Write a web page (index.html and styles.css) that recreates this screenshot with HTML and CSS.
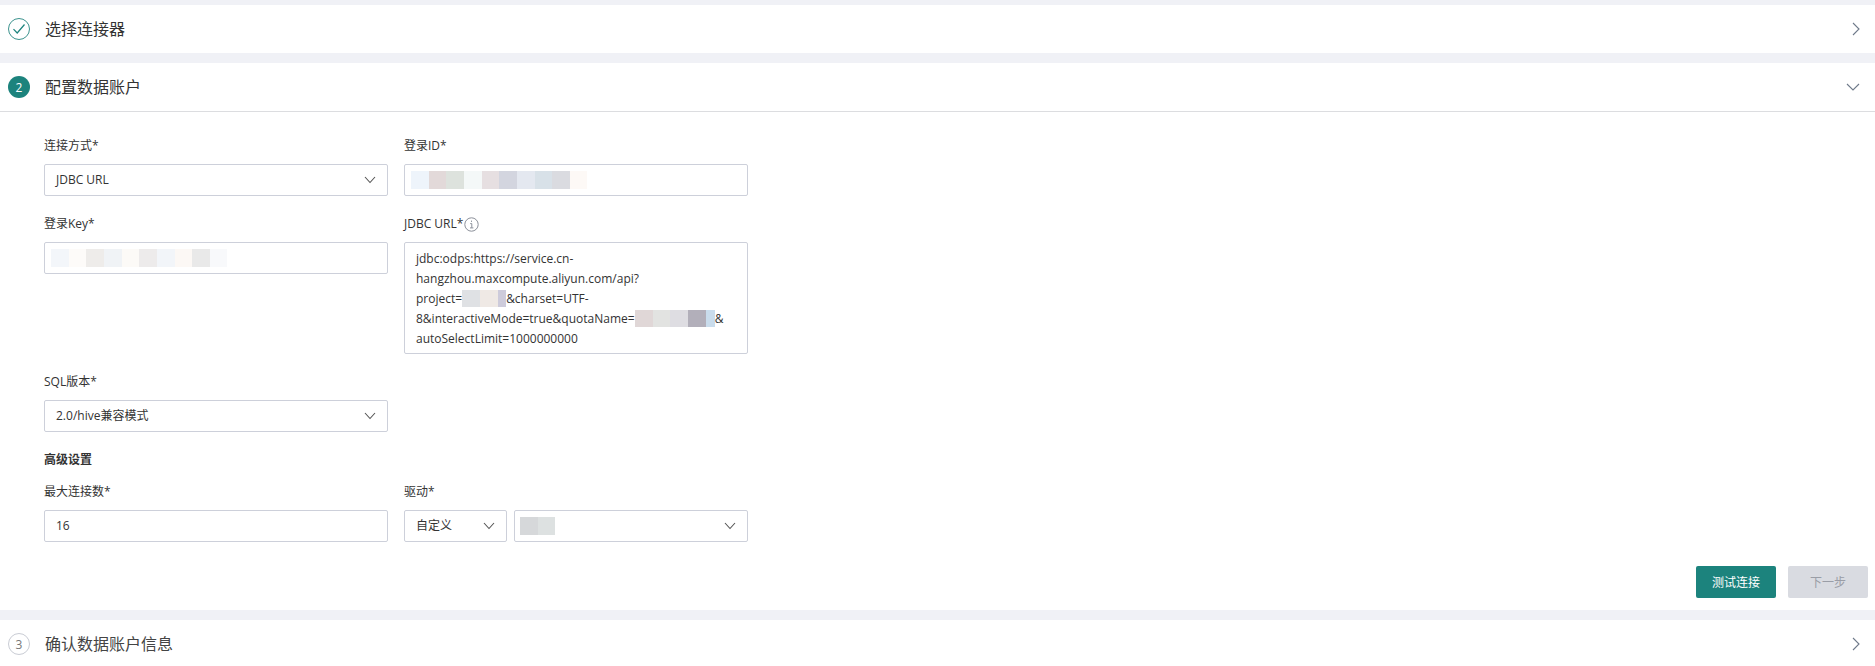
FILE: index.html
```html
<!DOCTYPE html>
<html lang="zh">
<head>
<meta charset="utf-8">
<title>配置数据账户</title>
<link rel="stylesheet" href="styles.css">
</head>
<body>
<div class="steps">
  <section class="card">
    <header class="head">
      <span class="badge badge-done"><svg width="14" height="12" viewBox="0 0 14 12"><path d="M1.5 6.2 5.2 10 12.5 1.5" fill="none" stroke="#1c837d" stroke-width="1.2"/></svg></span>
      <h2 class="title">选择连接器</h2>
      <svg class="head-arrow" width="8" height="14" viewBox="0 0 8 14"><path d="M1 1l6 6-6 6" fill="none" stroke="#6f7a8a" stroke-width="1.1"/></svg>
    </header>
  </section>
  <section class="card">
    <header class="head head-open">
      <span class="badge badge-active">2</span>
      <h2 class="title">配置数据账户</h2>
      <svg class="head-arrow" width="14" height="8" viewBox="0 0 14 8"><path d="M1 1l6 6 6-6" fill="none" stroke="#6f7a8a" stroke-width="1.1"/></svg>
    </header>
    <div class="body">
      <div class="form-grid">
        <div class="field">
          <label class="label">连接方式*</label>
          <div class="control select">JDBC URL<svg class="chev" width="12" height="8" viewBox="0 0 12 8"><path d="M1 1l5 5.5L11 1" fill="none" stroke="#555" stroke-width="1.1"/></svg></div>
        </div>
        <div class="field">
          <label class="label">登录ID*</label>
          <div class="control masked">
            <span class="mosaic mosaic-block">
              <i class="c c18" style="background:#eef4fb"></i><i class="c c17" style="background:#e2d9d9"></i><i class="c c18" style="background:#dde2dd"></i><i class="c c18" style="background:#f4f8f8"></i><i class="c c17" style="background:#e6dfe1"></i><i class="c c18" style="background:#d3d5df"></i><i class="c c18" style="background:#e4e8f0"></i><i class="c c17" style="background:#d8e1e8"></i><i class="c c18" style="background:#dadbe0"></i><i class="c c17" style="background:#fdf9f6"></i>
            </span>
          </div>
        </div>
        <div class="field">
          <label class="label">登录Key*</label>
          <div class="control masked">
            <span class="mosaic mosaic-block">
              <i class="c c18" style="background:#f3f6fa"></i><i class="c c17" style="background:#fdfbf9"></i><i class="c c18" style="background:#eeecea"></i><i class="c c18" style="background:#f0f3f6"></i><i class="c c17" style="background:#fcfaf7"></i><i class="c c18" style="background:#edebeb"></i><i class="c c18" style="background:#f2f5f9"></i><i class="c c17" style="background:#fcf8f5"></i><i class="c c18" style="background:#e9e9e9"></i><i class="c c17" style="background:#f8f9fb"></i>
            </span>
          </div>
        </div>
        <div class="field">
          <label class="label">JDBC URL*<svg class="info" width="15" height="15" viewBox="0 0 15 15"><circle cx="7.5" cy="7.5" r="6.7" fill="none" stroke="#8a8f99"/><path d="M6.2 6.6h1.6v4.2M6 10.9h3.4M7.5 3.6v1.3" fill="none" stroke="#8a8f99"/></svg></label>
          <div class="control area">jdbc:odps:https://service.cn-<br>hangzhou.maxcompute.aliyun.com/api?<br>project=<span class="mosaic mosaic-inline"><i class="c c18" style="background:#dfe1e4"></i><i class="c c18" style="background:#efe9e5"></i><i class="c c8" style="background:#cdcbdb"></i></span>&amp;charset=UTF-<br>8&amp;interactiveMode=true&amp;quotaName=<span class="mosaic mosaic-inline"><i class="c c18" style="background:#e0d7d7"></i><i class="c c17" style="background:#e2e3e1"></i><i class="c c18" style="background:#dedde2"></i><i class="c c18" style="background:#b2afba"></i><i class="c c9" style="background:#c9dcec"></i></span>&amp;<br>autoSelectLimit=1000000000</div>
        </div>
        <div class="field">
          <label class="label">SQL版本*</label>
          <div class="control select">2.0/hive兼容模式<svg class="chev" width="12" height="8" viewBox="0 0 12 8"><path d="M1 1l5 5.5L11 1" fill="none" stroke="#555" stroke-width="1.1"/></svg></div>
        </div>
        <div class="field"></div>
        <h3 class="section-title">高级设置</h3>
        <div class="field">
          <label class="label">最大连接数*</label>
          <div class="control">16</div>
        </div>
        <div class="field">
          <label class="label">驱动*</label>
          <div class="driver">
            <div class="control select select-kind">自定义<svg class="chev" width="12" height="8" viewBox="0 0 12 8"><path d="M1 1l5 5.5L11 1" fill="none" stroke="#555" stroke-width="1.1"/></svg></div>
            <div class="control select select-driver"><span class="mosaic mosaic-block"><i class="c c18" style="background:#d6d8da"></i><i class="c c17" style="background:#dde1e1"></i></span><svg class="chev" width="12" height="8" viewBox="0 0 12 8"><path d="M1 1l5 5.5L11 1" fill="none" stroke="#555" stroke-width="1.1"/></svg></div>
          </div>
        </div>
      </div>
      <div class="actions">
        <button class="btn btn-primary" type="button">测试连接</button>
        <button class="btn btn-disabled" type="button" disabled>下一步</button>
      </div>
    </div>
  </section>
  <section class="card">
    <header class="head">
      <span class="badge badge-todo">3</span>
      <h2 class="title title-todo">确认数据账户信息</h2>
      <svg class="head-arrow" width="8" height="14" viewBox="0 0 8 14"><path d="M1 1l6 6-6 6" fill="none" stroke="#6f7a8a" stroke-width="1.1"/></svg>
    </header>
  </section>
</div>
</body>
</html>
```
FILE: styles.css
```css
* { box-sizing: border-box; }
html, body { margin: 0; padding: 0; height: 100%; overflow: hidden; }
body {
  background: #f0f1f6;
  color: #333;
  font-family: "Open Sans", "Noto Sans CJK SC", sans-serif;
  font-size: 12px;
}
.steps { display: flex; flex-direction: column; gap: 10px; padding-top: 5px; }
.card { background: #fff; }
.head {
  display: flex;
  align-items: center;
  height: 48px;
  padding: 0 15px 0 8px;
}
.head-open { height: 49px; border-bottom: 1px solid #dcdde0; }
.badge {
  display: flex;
  align-items: center;
  justify-content: center;
  flex: none;
  width: 22px;
  height: 22px;
  border-radius: 50%;
  font-size: 12px;
}
.badge-done { border: 1px solid #3c938e; }
.badge-active { background: #1c837d; color: #fff; }
.badge-todo { border: 1px solid #c9ccd4; color: #777; }
.title {
  flex: 1;
  margin: 0 0 0 15px;
  font-size: 16px;
  font-weight: 400;
  line-height: 24px;
  color: #333;
}
.title-todo { color: #444; }
.head-arrow { flex: none; }
.body { padding: 24px 7px 12px 44px; }
.form-grid {
  display: grid;
  grid-template-columns: 344px 344px;
  column-gap: 16px;
  row-gap: 18px;
}
.label {
  display: flex;
  align-items: center;
  height: 20px;
  margin-bottom: 8px;
  line-height: 20px;
  color: #333;
}
.info { margin-left: 1px; }
.control {
  display: flex;
  align-items: center;
  height: 32px;
  padding: 0 11px;
  border: 1px solid #cdd0da;
  border-radius: 2px;
  background: #fff;
  line-height: 20px;
  color: #333;
}
.select { justify-content: space-between; }
.masked { padding: 0 6px; }
.chev { flex: none; }
.area {
  display: block;
  height: 112px;
  padding: 6px 11px;
  white-space: nowrap;
}
.section-title {
  grid-column: 1 / -1;
  margin: 0 0 -6px;
  font-size: 12px;
  font-weight: 700;
  line-height: 20px;
  color: #333;
}
.driver { display: flex; gap: 7px; }
.select-kind { flex: none; width: 103px; }
.select-driver { flex: 1; padding-left: 5px; }
.mosaic { display: inline-flex; }
.mosaic-block { height: 18px; }
.mosaic-inline { height: 17px; vertical-align: -4px; }
.c { display: block; height: 100%; }
.c8 { width: 8px; }
.c9 { width: 9px; }
.c17 { width: 17px; }
.c18 { width: 18px; }
.actions {
  display: flex;
  justify-content: flex-end;
  gap: 12px;
  margin-top: 24px;
}
.btn {
  width: 80px;
  height: 32px;
  padding: 0;
  border: 0;
  border-radius: 2px;
  font: inherit;
}
.btn-primary { background: #1c837d; color: #fff; }
.btn-disabled { background: #d9dbe1; color: #9a9da6; }
```
